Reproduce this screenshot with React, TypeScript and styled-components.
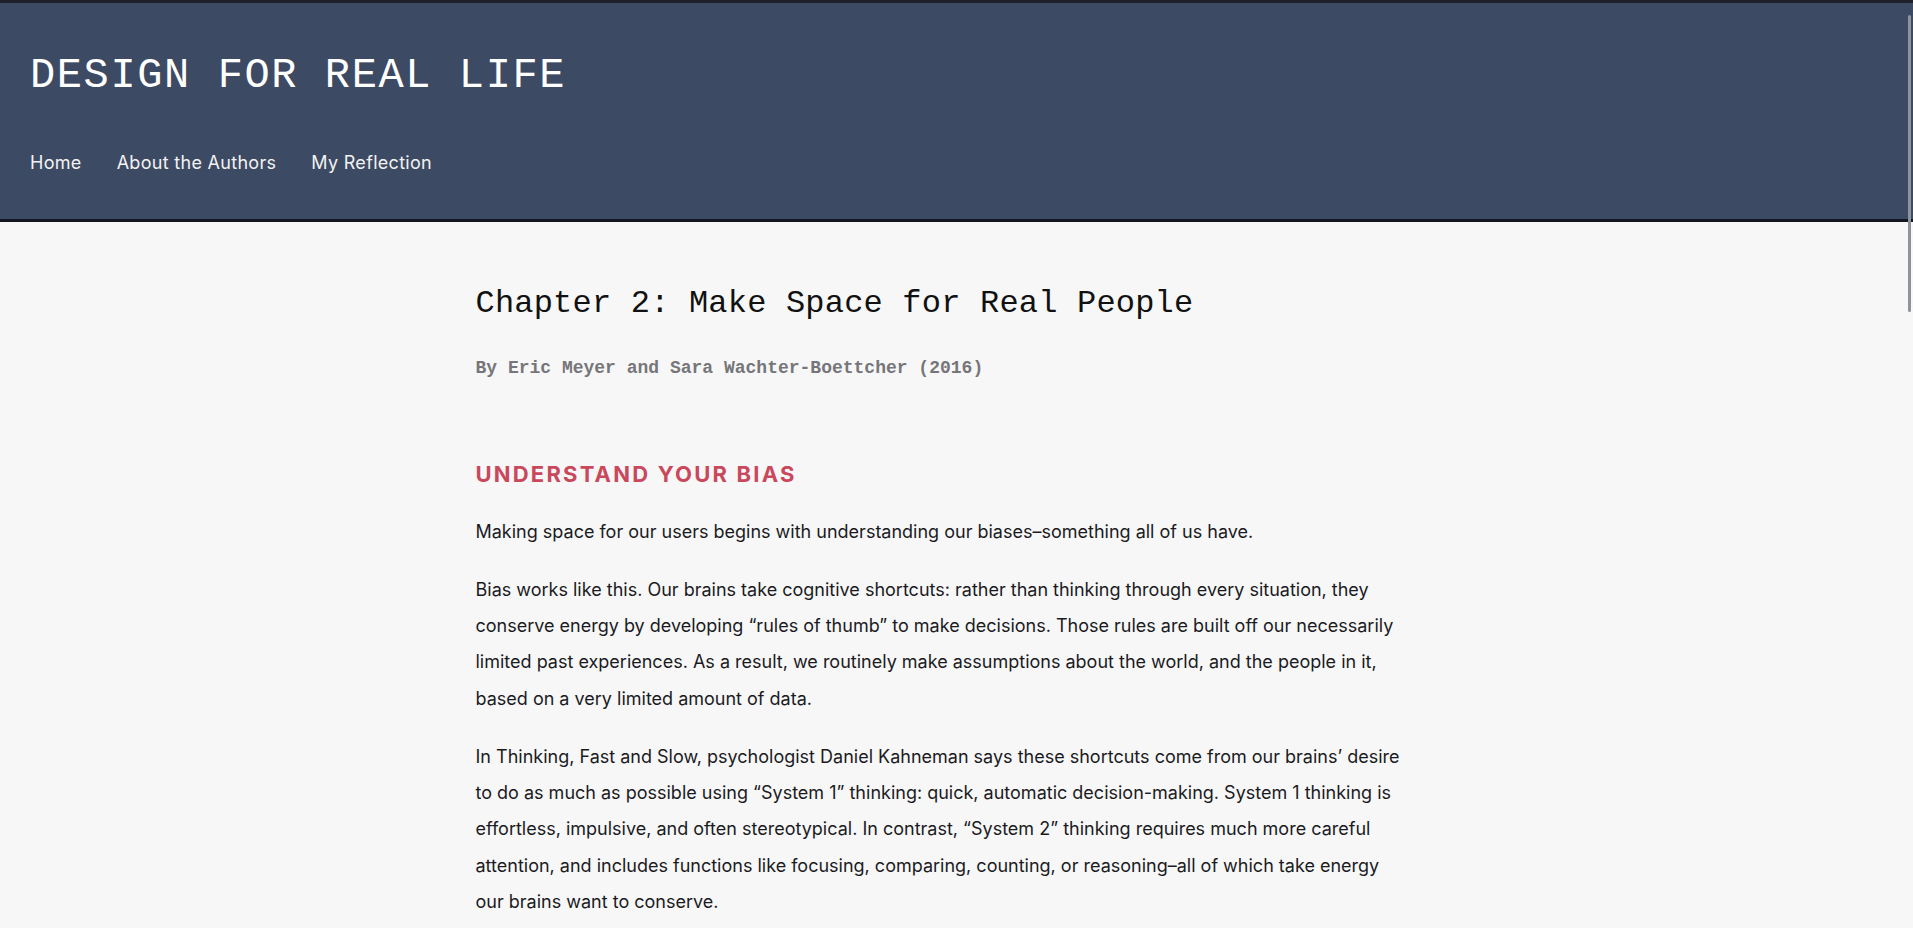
import {Fragment} from 'react';
import styled, {createGlobalStyle} from 'styled-components';

const GlobalStyle = createGlobalStyle`
   html {
      scrollbar-width: none;
   }
   html::-webkit-scrollbar {
      display: none;
   }
   body {
      margin: 0;
      background: #f7f7f7;
      color: #1b1b1f;
      font-family: Inter, 'Noto Sans', sans-serif;
   }
`;

const mono = `'Liberation Mono', 'DejaVu Sans Mono', monospace`;
const grotesk = `Inter, 'Noto Sans', sans-serif`;

const Header = styled.header`
   background: #3d4a63;
   border-top: 3px solid #1f1f2b;
   border-bottom: 3px solid #13151f;
   padding: 48px 30px 44px;
   display: flex;
   flex-direction: column;
   gap: 50px;
`;

const SiteTitle = styled.h1`
   margin: 0;
   font-family: ${mono};
   font-weight: 400;
   font-size: 42px;
   line-height: 50px;
   letter-spacing: 1.6px;
   color: #ffffff;
`;

const Nav = styled.nav`
   display: flex;
   gap: 35px;
`;

const NavLink = styled.a`
   font-family: ${grotesk};
   font-size: 18px;
   line-height: 24px;
   letter-spacing: 0.3px;
   color: #f2f2f2;
   text-decoration: none;
   cursor: pointer;
`;

const Main = styled.main`
   max-width: 962px;
   margin: 0 auto;
   padding: 62px 0 80px;
`;

const ChapterTitle = styled.h2`
   margin: 0 0 31px;
   font-family: ${mono};
   font-weight: 400;
   font-size: 32px;
   line-height: 40px;
   letter-spacing: 0.2px;
   color: #111111;
`;

const Byline = styled.p`
   margin: 0 0 78px;
   font-family: ${mono};
   font-weight: 700;
   font-size: 18px;
   line-height: 26px;
   color: #76767a;
`;

const SectionTitle = styled.h3`
   margin: 0 0 25px;
   font-family: ${grotesk};
   font-weight: 700;
   font-size: 22px;
   line-height: 30px;
   letter-spacing: 2.2px;
   text-transform: uppercase;
   color: #c9485c;
`;

const Para = styled.p`
   margin: 0 0 21.6px;
   font-family: ${grotesk};
   font-size: 18px;
   line-height: 36.3px;
   white-space: nowrap;
   color: #1b1b1f;
`;

const ScrollThumb = styled.div`
   position: fixed;
   top: 15px;
   right: 2px;
   width: 3px;
   height: 297px;
   border-radius: 2px;
   background: #8e949b;
`;

const navItems = ['Home', 'About the Authors', 'My Reflection'];

// lines kept as they wrap in the original column
const paragraphs = [
   ['Making space for our users begins with understanding our biases–something all of us have.'],
   [
      'Bias works like this. Our brains take cognitive shortcuts: rather than thinking through every situation, they',
      'conserve energy by developing “rules of thumb” to make decisions. Those rules are built off our necessarily',
      'limited past experiences. As a result, we routinely make assumptions about the world, and the people in it,',
      'based on a very limited amount of data.',
   ],
   [
      'In Thinking, Fast and Slow, psychologist Daniel Kahneman says these shortcuts come from our brains’ desire',
      'to do as much as possible using “System 1” thinking: quick, automatic decision-making. System 1 thinking is',
      'effortless, impulsive, and often stereotypical. In contrast, “System 2” thinking requires much more careful',
      'attention, and includes functions like focusing, comparing, counting, or reasoning–all of which take energy',
      'our brains want to conserve.',
   ],
];

export default function App() {
   return (
      <>
         <GlobalStyle />
         <Header>
            <SiteTitle>DESIGN FOR REAL LIFE</SiteTitle>
            <Nav>
               {navItems.map((item) => (
                  <NavLink key={item}>{item}</NavLink>
               ))}
            </Nav>
         </Header>
         <Main>
            <ChapterTitle>Chapter 2: Make Space for Real People</ChapterTitle>
            <Byline>By Eric Meyer and Sara Wachter-Boettcher (2016)</Byline>

            <SectionTitle>Understand Your Bias</SectionTitle>
            {paragraphs.map((lines, i) => (
               <Para key={i}>
                  {lines.map((line, j) => (
                     <Fragment key={j}>
                        {j > 0 && <br />}
                        {line}
                     </Fragment>
                  ))}
               </Para>
            ))}
         </Main>
         <ScrollThumb />
      </>
   );
}
